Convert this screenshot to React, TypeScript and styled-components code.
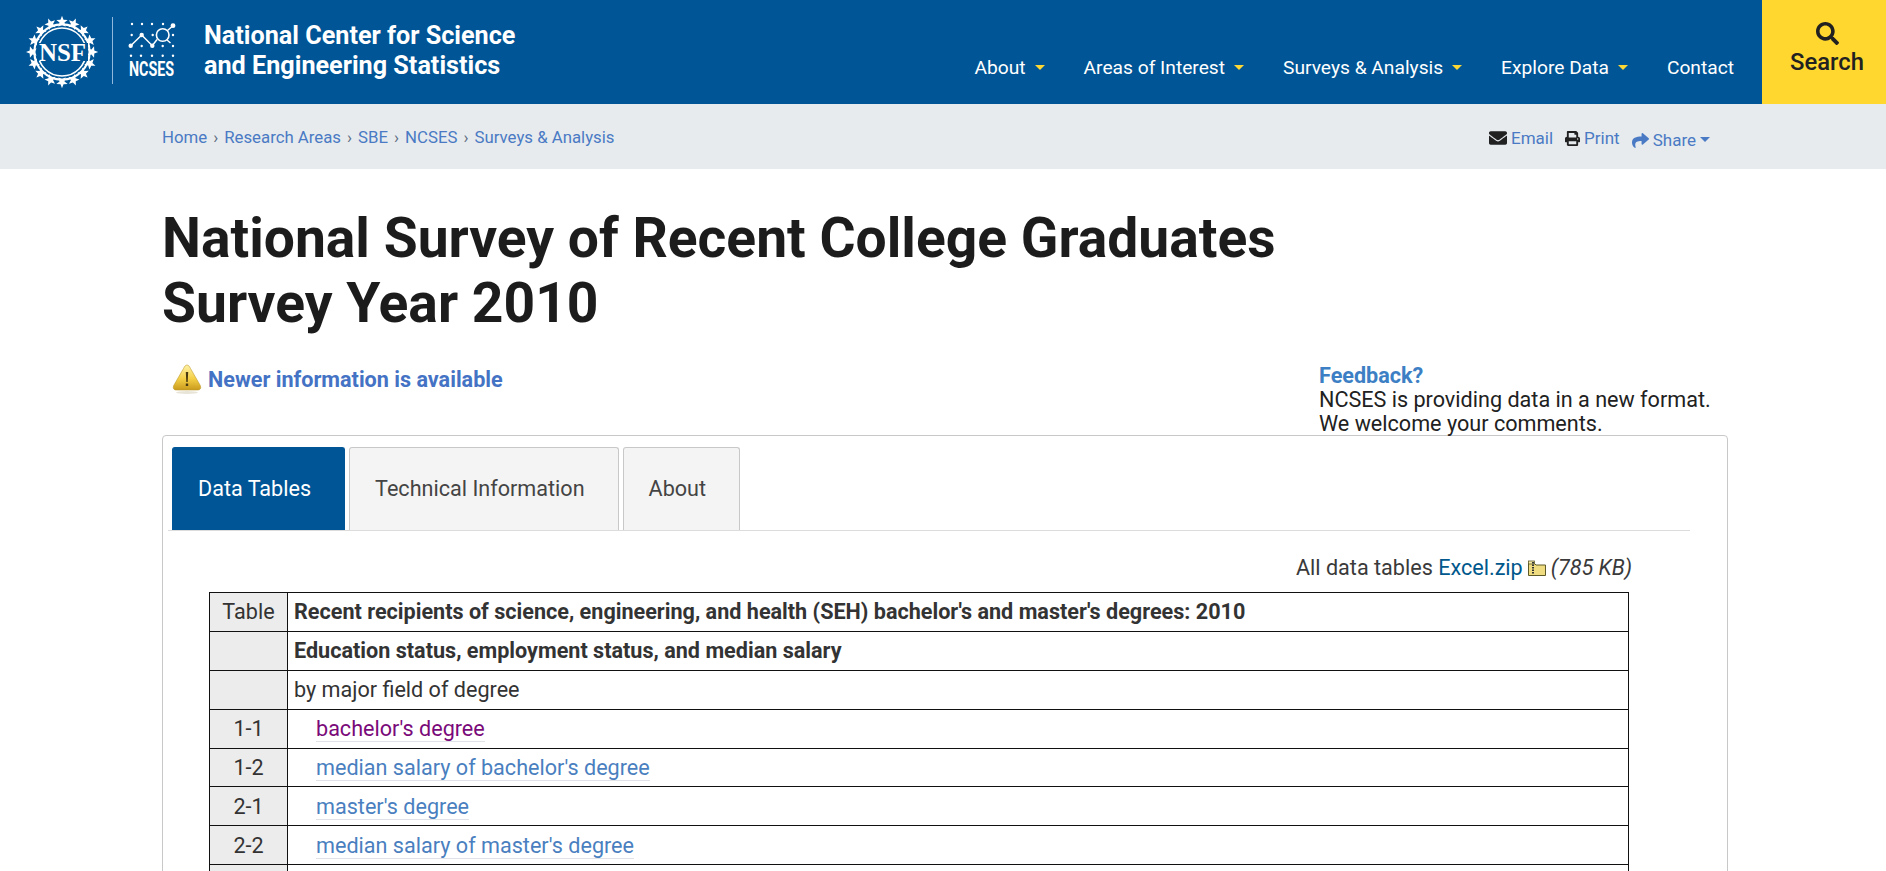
import React from "react";
import styled, { createGlobalStyle } from "styled-components";
import { FaEnvelope, FaPrint, FaShare, FaSearch } from "react-icons/fa";

const Global = createGlobalStyle`
  html, body { margin: 0; padding: 0; background: #fff; overflow: hidden; height: 871px; }
  body { font-family: Roboto, "Liberation Sans", sans-serif; color: #212121; }
  a { text-decoration: none; }
`;

const Header = styled.header`
  display: flex;
  height: 104px;
  background: #005596;
  color: #fff;
`;
const LogoArea = styled.a`
  display: flex;
  align-items: center;
  color: #fff;
  padding-left: 26px;
`;
const SiteTitle = styled.div`
  margin-left: 28px;
  font-size: 25.2px;
  font-weight: 700;
  line-height: 30px;
  margin-top: -1.5px;
`;
const Nav = styled.nav`
  display: flex;
  margin-left: auto;
  gap: 39px;
  padding-top: 56px;
  padding-right: 28px;
`;
const NavItem = styled.a`
  display: flex;
  align-items: flex-start;
  height: 24px;
  line-height: 24px;
  color: #fff;
  font-size: 19.2px;
`;
const NavCaret = styled.span`
  width: 0;
  height: 0;
  margin: 9px 0 0 9px;
  border-left: 5px solid transparent;
  border-right: 5px solid transparent;
  border-top: 5px solid #fdd835;
`;
const SearchBtn = styled.a`
  display: flex;
  flex-direction: column;
  align-items: center;
  width: 124px;
  padding: 22px 0 0 6px;
  background: #ffd72e;
  color: #212121;
  font-size: 23.8px;
  font-weight: 500;
  line-height: 28px;
  box-sizing: border-box;
  svg { width: 23px; height: 23px; margin-bottom: 3px; }
`;
const SubBar = styled.div`
  display: flex;
  justify-content: space-between;
  height: 65px;
  background: #e7ebee;
  padding: 0 176px 0 162px;
`;
const Crumbs = styled.div`
  padding-top: 23px;
  line-height: 20px;
  font-size: 16.8px;
  color: #4a7ac4;
`;
const Crumb = styled.a`
  color: #4a7ac4;
`;
const CrumbSep = styled.span`
  margin: 0 6px;
  color: #5c6b80;
`;
const Tools = styled.div`
  display: flex;
  padding-top: 24px;
  gap: 12px;
  font-size: 17px;
  line-height: 20px;
`;
const Tool = styled.a<{ $drop?: number; $icon: number }>`
  display: flex;
  align-items: flex-start;
  color: #4a7ac4;
  gap: 4px;
  position: relative;
  top: ${(p) => p.$drop ?? 0}px;
  svg {
    margin-top: ${(p) => (20 - p.$icon) / 2}px;
    width: ${(p) => p.$icon}px;
    height: ${(p) => p.$icon}px;
    color: #212121;
  }
`;
const ShareIcon = styled(FaShare)`
  && { color: #4a7ac4; }
`;
const ShareCaret = styled.span`
  width: 0;
  height: 0;
  margin: 7px 0 0 0;
  border-left: 5px solid transparent;
  border-right: 5px solid transparent;
  border-top: 5px solid #4a7ac4;
`;
const Main = styled.main`
  padding: 0 158px 0 162px;
`;
const Title = styled.h1`
  margin: 37px 0 28px;
  font-size: 55.2px;
  line-height: 64.5px;
  font-weight: 700;
  color: #1c1c1c;
`;
const InfoRow = styled.div`
  display: flex;
  justify-content: space-between;
  height: 72px;
`;
const Notice = styled.a`
  display: flex;
  align-items: center;
  height: 32px;
  padding-left: 10px;
  gap: 6px;
  font-size: 21.6px;
  font-weight: 700;
  color: #4472c4;
`;
const Feedback = styled.div`
  width: 408px;
  margin-right: 1px;
  padding-top: 1px;
  font-size: 21.6px;
  line-height: 24px;
  color: #212121;
`;
const FeedbackLink = styled.a`
  display: block;
  font-weight: 700;
  color: #3d7fc4;
`;
const Card = styled.section`
  box-sizing: border-box;
  height: 600px;
  border: 1px solid #c8c8c8;
  border-radius: 4px;
  padding: 11px 0 0;
`;
const Tabs = styled.div`
  display: flex;
  gap: 4px;
  margin: 0 37px 0 5px;
  padding-left: 4px;
  border-bottom: 1px solid #dcdcdc;
`;
const Tab = styled.a<{ $active?: boolean }>`
  display: flex;
  align-items: center;
  box-sizing: border-box;
  height: 83px;
  padding: 0 33px 2px 25px;
  font-size: 21.6px;
  border-radius: 3px 3px 0 0;
  background: ${(p) => (p.$active ? "#005596" : "#f4f4f4")};
  color: ${(p) => (p.$active ? "#fff" : "#444")};
  border: 1px solid ${(p) => (p.$active ? "#005596" : "#c8c8c8")};
  border-bottom: 0;
`;
const DownloadRow = styled.div`
  display: flex;
  justify-content: flex-end;
  align-items: center;
  height: 61px;
  padding: 12px 95px 0 0;
  box-sizing: border-box;
  font-size: 21.6px;
  color: #3a3a3a;
  gap: 5px;
`;
const ZipLink = styled.a`
  color: #00588c;
`;
const Size = styled.i`
  font-style: italic;
`;
const DataTable = styled.table`
  width: 1420px;
  margin-left: 46px;
  border-collapse: collapse;
  font-size: 21.6px;
  color: #333;
  td { border: 1px solid #111; height: 38.9px; padding: 0 6px; box-sizing: border-box; }
`;
const NumCell = styled.td`
  width: 78px;
  text-align: center;
  background: #ececec;
`;
const HeadCell = styled.td`
  font-weight: 700;
`;
const TableLink = styled.a<{ $visited?: boolean }>`
  margin-left: 22px;
  color: ${(p) => (p.$visited ? "#7a0a7a" : "#4a7fbf")};
  border-bottom: 1px solid #dfe3e8;
`;

const Star = ({ a }: { a: number }) => {
  const cx = 36 + 30.2 * Math.cos(a);
  const cy = 36 + 30.2 * Math.sin(a);
  const pts: string[] = [];
  for (let i = 0; i < 10; i++) {
    const r = i % 2 === 0 ? 6 : 2.6;
    const t = a + (i * Math.PI) / 5;
    pts.push(`${(cx + r * Math.cos(t)).toFixed(2)},${(cy + r * Math.sin(t)).toFixed(2)}`);
  }
  return <polygon points={pts.join(" ")} fill="#fff" />;
};

const NsfMark = () => (
  <svg width="150" height="72" viewBox="0 0 150 72">
    <circle cx="36" cy="36" r="24" fill="none" stroke="#fff" strokeWidth="1.6" />
    <circle cx="36" cy="36" r="27.6" fill="none" stroke="#fff" strokeWidth="2.2" />
    {Array.from({ length: 16 }).map((_, i) => (
      <Star key={i} a={-Math.PI / 2 + (i * Math.PI) / 8} />
    ))}
    <rect x="11" y="27" width="51" height="18" fill="#005596" />
    <text x="36.5" y="44.5" textAnchor="middle" fontFamily="'Liberation Serif', serif" fontWeight="700" fontSize="25" fill="#fff" textLength="47" lengthAdjust="spacingAndGlyphs">NSF</text>
    <line x1="86.5" y1="1" x2="86.5" y2="68" stroke="#8fb8dc" strokeWidth="1" />
    <g fill="#fff">
      {[106, 116, 126, 137].map((x) => <circle key={x} cx={x} cy="8" r="1.2" />)}
      {[105.7, 126.7, 147].map((x) => <circle key={x} cx={x} cy="19" r="1.2" />)}
      {[115.7, 136.7, 147].map((x) => <circle key={x} cx={x} cy="30" r="1.2" />)}
      {[105, 115, 126, 136.7, 147].map((x) => <circle key={x} cx={x} cy="39.7" r="1.2" />)}
      <circle cx="104.7" cy="29.7" r="2.2" />
      <circle cx="115.7" cy="19" r="2.2" />
      <circle cx="126.3" cy="29.7" r="2.2" />
      <circle cx="147" cy="9.7" r="2.4" />
    </g>
    <path d="M104.7 29.7 L115.7 19 L126.3 29.7 L131 23.5 M141.5 14.5 L147 9.7 M141 24 L144.5 27" fill="none" stroke="#fff" strokeWidth="1.5" />
    <circle cx="136.7" cy="19" r="6.3" fill="none" stroke="#fff" strokeWidth="1.6" />
    <text x="103" y="60" fontFamily="Roboto, sans-serif" fontWeight="700" fontSize="20" fill="#fff" textLength="45" lengthAdjust="spacingAndGlyphs">NCSES</text>
  </svg>
);

const Warning = () => (
  <svg width="30" height="32" viewBox="0 0 30 32">
    <defs>
      <linearGradient id="warnFill" x1="0" y1="0" x2="0" y2="1">
        <stop offset="0" stopColor="#fff3a8" />
        <stop offset="0.55" stopColor="#f4cf45" />
        <stop offset="1" stopColor="#c99a1c" />
      </linearGradient>
    </defs>
    <path d="M15 2 C16.5 2 17.5 3.5 18.5 5.5 L28 22 C29.5 25 28.5 27 25.5 27 L4.5 27 C1.5 27 0.5 25 2 22 L11.5 5.5 C12.5 3.5 13.5 2 15 2 Z" fill="url(#warnFill)" stroke="#bd9a2c" strokeWidth="0.6" />
    <path d="M13.8 9 H16.2 L15.7 19 H14.3 Z M13.8 20.5 H16.2 V23 H13.8 Z" fill="#4a3a10" />
    <ellipse cx="15" cy="29.5" rx="11" ry="1.4" fill="#e8e4d8" />
  </svg>
);

const ZipIcon = () => (
  <svg width="18" height="16" viewBox="0 0 18 16">
    <path d="M0.5 3.5 H6.5 L8 5 H17.5 V15.5 H0.5 Z" fill="#efdc80" stroke="#5e5a28" strokeWidth="1" />
    <rect x="0.5" y="1" width="6" height="3" fill="#f7eaa8" stroke="#5e5a28" strokeWidth="0.8" />
    <path d="M5 2 V14" stroke="#333" strokeWidth="2" strokeDasharray="1.5 1" />
  </svg>
);

const rows = [
  { n: "1-1", t: "bachelor's degree", v: true },
  { n: "1-2", t: "median salary of bachelor's degree" },
  { n: "2-1", t: "master's degree" },
  { n: "2-2", t: "median salary of master's degree" },
];

export default function App() {
  return (
    <>
      <Global />
      <Header>
        <LogoArea href="#">
          <NsfMark />
          <SiteTitle>National Center for Science<br />and Engineering Statistics</SiteTitle>
        </LogoArea>
        <Nav>
          {["About", "Areas of Interest", "Surveys & Analysis", "Explore Data"].map((t) => (
            <NavItem href="#" key={t}>{t}<NavCaret /></NavItem>
          ))}
          <NavItem href="#">Contact</NavItem>
        </Nav>
        <SearchBtn href="#"><FaSearch />Search</SearchBtn>
      </Header>
      <SubBar>
        <Crumbs>
          <Crumb href="#">Home</Crumb><CrumbSep>›</CrumbSep>
          <Crumb href="#">Research Areas</Crumb><CrumbSep>›</CrumbSep>
          <Crumb href="#">SBE</Crumb><CrumbSep>›</CrumbSep>
          <Crumb href="#">NCSES</Crumb><CrumbSep>›</CrumbSep>
          <Crumb href="#">Surveys &amp; Analysis</Crumb>
        </Crumbs>
        <Tools>
          <Tool href="#" $icon={18}><FaEnvelope />Email</Tool>
          <Tool href="#" $icon={15}><FaPrint />Print</Tool>
          <Tool href="#" $icon={17} $drop={2}><ShareIcon />Share<ShareCaret /></Tool>
        </Tools>
      </SubBar>
      <Main>
        <Title>National Survey of Recent College Graduates<br />Survey Year 2010</Title>
        <InfoRow>
          <Notice href="#"><Warning />Newer information is available</Notice>
          <Feedback>
            <FeedbackLink href="#">Feedback?</FeedbackLink>
            NCSES is providing data in a new format.<br />We welcome your comments.
          </Feedback>
        </InfoRow>
        <Card>
          <Tabs>
            <Tab $active href="#">Data Tables</Tab>
            <Tab href="#">Technical Information</Tab>
            <Tab href="#">About</Tab>
          </Tabs>
          <DownloadRow>
            <span>All data tables <ZipLink href="#">Excel.zip</ZipLink></span>
            <ZipIcon />
            <Size>(785 KB)</Size>
          </DownloadRow>
          <DataTable>
            <tbody>
              <tr><NumCell>Table</NumCell><HeadCell>Recent recipients of science, engineering, and health (SEH) bachelor's and master's degrees: 2010</HeadCell></tr>
              <tr><NumCell /><HeadCell>Education status, employment status, and median salary</HeadCell></tr>
              <tr><NumCell /><td>by major field of degree</td></tr>
              {rows.map((r) => (
                <tr key={r.n}>
                  <NumCell>{r.n}</NumCell>
                  <td><TableLink href="#" $visited={r.v}>{r.t}</TableLink></td>
                </tr>
              ))}
              <tr><NumCell /><td /></tr>
            </tbody>
          </DataTable>
        </Card>
      </Main>
    </>
  );
}
